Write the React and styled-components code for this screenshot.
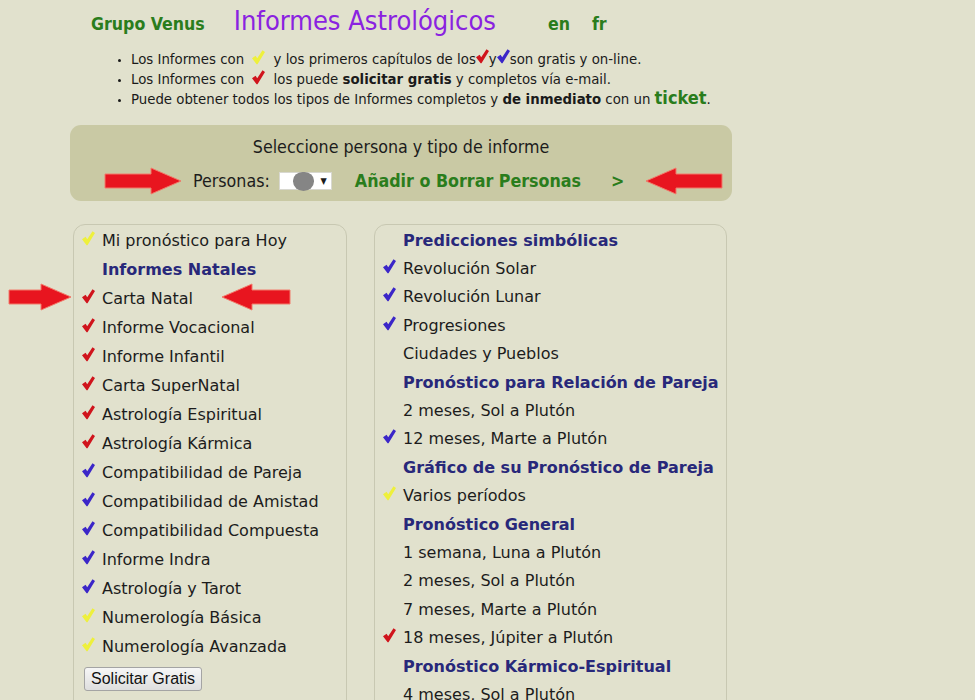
import React from "react";
import styled, { createGlobalStyle } from "styled-components";

const GlobalStyle = createGlobalStyle`
    body {
        margin: 0;
        background: #e1e1cd;
        font-family: "DejaVu Sans", Verdana, sans-serif;
        color: #1c1c1c;
    }
`;

const tickColors = {
    yellow: "#eef03c",
    red: "#d0141c",
    blue: "#3b26c8",
};

// hand-drawn style check mark, heavier at the bottom stroke
const Tick = ({ color }) => (
    <svg width="13" height="15" viewBox="0 0 13 15">
        <path d="M0 8.3 L3.6 5.7 L5.2 8.3 L10.5 0.2 L13 1.9 L5.5 14.3 L4.6 14.3 Z" fill={tickColors[color]} />
    </svg>
);

const Arrow = ({ dir, className, w = 80 }) => (
    <svg className={className} width={w} height="30" viewBox={`0 0 ${w} 30`}>
        <g transform={dir === "left" ? `translate(${w} 0) scale(-1 1)` : undefined}>
            <path
                d={`M2 8 L${w - 32} 8 L${w - 32} 2 L${w - 2} 15 L${w - 32} 28 L${w - 32} 22 L2 22 Z`}
                fill="#e8151f"
                stroke="#f27a6a"
                strokeWidth="1"
                strokeLinejoin="round"
            />
        </g>
    </svg>
);

const Page = styled.div`
    width: 662px;
    margin-left: 70px;
    padding-top: 5px;
    position: relative;
`;

const Header = styled.div`
    display: flex;
    align-items: baseline;
    padding-left: 21px;
    height: 30px;
`;

const Brand = styled.span`
    font-family: "DejaVu Sans Condensed", "DejaVu Sans", sans-serif;
    font-stretch: condensed;
    font-weight: bold;
    font-size: 17.6px;
    color: #2a7d1c;
    margin-right: ${(p) => p.$gap || 0}px;
`;

const Title = styled.span`
    font-family: "DejaVu Sans Condensed", "DejaVu Sans", sans-serif;
    font-stretch: condensed;
    font-size: 27px;
    color: #8a22e0;
    margin-right: 52px;
`;

const Notes = styled.ul`
    margin: 14px 0 0;
    padding-left: 61px;
    font-family: "DejaVu Sans Condensed", "DejaVu Sans", sans-serif;
    font-stretch: condensed;
    font-size: 14.8px;
    color: #1a1a1a;
    li {
        line-height: 20px;
        height: 20px;
    }
    li::marker {
        font-size: 10px;
    }
`;

const InlineTick = styled.span`
    display: inline-block;
    vertical-align: -1px;
    margin: 0 ${(p) => p.$side || 0}px;
`;

const TicketWord = styled.b`
    font-size: 18px;
    line-height: 10px;
    color: #2a7d1c;
`;

const Selector = styled.div`
    margin-top: 16px;
    background: #c9c9a4;
    border-radius: 11px;
    height: 76px;
    display: flex;
    flex-direction: column;
    align-items: center;
    font-family: "DejaVu Sans Condensed", "DejaVu Sans", sans-serif;
    font-stretch: condensed;
`;

const SelectorTitle = styled.div`
    font-size: 17.7px;
    margin-top: 12px;
    color: #1c1c1c;
`;

const SelectorRow = styled.div`
    display: flex;
    align-items: center;
    margin-top: 9px;
    width: 100%;
    padding-left: 33px;
    box-sizing: border-box;
    font-size: 17.7px;
`;

const PersonLabel = styled.span`
    margin-left: 10px;
`;

const PersonSelect = styled.div`
    width: 53px;
    height: 18px;
    background: #fff;
    border: 1px solid #d8d8d0;
    margin: 0 23px 0 9px;
    display: flex;
    align-items: center;
    justify-content: flex-end;
    padding-right: 4px;
    box-sizing: border-box;
    position: relative;
    font-size: 9px;
`;

const Blob = styled.span`
    position: absolute;
    left: 13px;
    top: -1px;
    width: 21px;
    height: 19px;
    border-radius: 45% 45% 50% 50%;
    background: #858585;
`;

const GreenLink = styled.b`
    color: #2a7d1c;
    margin-right: ${(p) => p.$gap || 0}px;
`;

const Columns = styled.div`
    display: flex;
    gap: 27px;
    margin-top: 23px;
    padding-left: 3px;
`;

const Box = styled.div`
    width: ${(p) => p.$width}px;
    height: 500px;
    border: 1px solid #c8c8b2;
    border-radius: 12px;
    box-sizing: border-box;
    padding: 1px 0 0 8px;
    font-size: 16px;
`;

const Row = styled.div`
    display: flex;
    align-items: center;
    height: ${(p) => p.$h}px;
    padding-left: ${(p) => p.$indent ?? 0}px;
`;

const TickSlot = styled.span`
    width: 20px;
    display: flex;
    align-items: center;
    margin-top: -4px;
`;

const Heading = styled.span`
    font-weight: bold;
    color: #28287a;
`;

const Button = styled.button`
    margin: 6px 0 0 2px;
    font-family: "Liberation Sans", Arial, sans-serif;
    font-size: 16px;
    padding: 2px 6px;
    background: linear-gradient(#f6f6f6, #dedede);
    border: 1px solid #a4a4a4;
    border-radius: 3px;
    color: #111;
`;

const Overlay = styled(Arrow)`
    position: absolute;
    left: ${(p) => p.$x}px;
    top: ${(p) => p.$y}px;
`;

const leftItems = [
    ["yellow", "Mi pronóstico para Hoy"],
    ["h", "Informes Natales"],
    ["red", "Carta Natal"],
    ["red", "Informe Vocacional"],
    ["red", "Informe Infantil"],
    ["red", "Carta SuperNatal"],
    ["red", "Astrología Espiritual"],
    ["red", "Astrología Kármica"],
    ["blue", "Compatibilidad de Pareja"],
    ["blue", "Compatibilidad de Amistad"],
    ["blue", "Compatibilidad Compuesta"],
    ["blue", "Informe Indra"],
    ["blue", "Astrología y Tarot"],
    ["yellow", "Numerología Básica"],
    ["yellow", "Numerología Avanzada"],
];

const rightItems = [
    ["h", "Predicciones simbólicas"],
    ["blue", "Revolución Solar"],
    ["blue", "Revolución Lunar"],
    ["blue", "Progresiones"],
    [null, "Ciudades y Pueblos"],
    ["h", "Pronóstico para Relación de Pareja"],
    [null, "2 meses, Sol a Plutón"],
    ["blue", "12 meses, Marte a Plutón"],
    ["h2", "Gráfico de su Pronóstico de Pareja"],
    ["yellow", "Varios períodos"],
    ["h", "Pronóstico General"],
    [null, "1 semana, Luna a Plutón"],
    [null, "2 meses, Sol a Plutón"],
    [null, "7 meses, Marte a Plutón"],
    ["red", "18 meses, Júpiter a Plutón"],
    ["h", "Pronóstico Kármico-Espiritual"],
    [null, "4 meses, Sol a Plutón"],
];

const ReportList = ({ items, h }) =>
    items.map(([kind, label], i) => (
        <Row key={i} $h={h} $indent={kind === "h2" ? -5 : 0}>
            <TickSlot>{kind && kind[0] !== "h" && <Tick color={kind} />}</TickSlot>
            {kind && kind[0] === "h" ? <Heading>{label}</Heading> : label}
        </Row>
    ));

const App = () => (
    <>
        <GlobalStyle />
        <Page>
            <Header>
                <Brand $gap={29}>Grupo Venus</Brand>
                <Title>Informes Astrológicos</Title>
                <Brand $gap={22}>en</Brand>
                <Brand>fr</Brand>
            </Header>
            <Notes>
                <li>
                    Los Informes con <InlineTick $side={4}><Tick color="yellow" /></InlineTick> y los primeros capítulos de los
                    <Tick color="red" />y<Tick color="blue" />son gratis y on-line.
                </li>
                <li>
                    Los Informes con <InlineTick $side={4}><Tick color="red" /></InlineTick> los puede <b>solicitar gratis</b> y completos vía e-mail.
                </li>
                <li>
                    Puede obtener todos los tipos de Informes completos y <b>de inmediato</b> con un <TicketWord>ticket</TicketWord>.
                </li>
            </Notes>
            <Selector>
                <SelectorTitle>Seleccione persona y tipo de informe</SelectorTitle>
                <SelectorRow>
                    <Arrow dir="right" />
                    <PersonLabel>Personas:</PersonLabel>
                    <PersonSelect>
                        <Blob />▼
                    </PersonSelect>
                    <GreenLink $gap={30}>Añadir o Borrar Personas</GreenLink>
                    <GreenLink $gap={20}>&gt;</GreenLink>
                    <Arrow dir="left" />
                </SelectorRow>
            </Selector>
            <Columns>
                <Box $width={274}>
                    <ReportList items={leftItems} h={29} />
                    <Button>Solicitar Gratis</Button>
                </Box>
                <Box $width={353}>
                    <ReportList items={rightItems} h={28.4} />
                </Box>
            </Columns>
            <Overlay dir="right" w={66} $x={-63} $y={282} />
            <Overlay dir="left" w={72} $x={150} $y={282} />
        </Page>
    </>
);

export default App;
